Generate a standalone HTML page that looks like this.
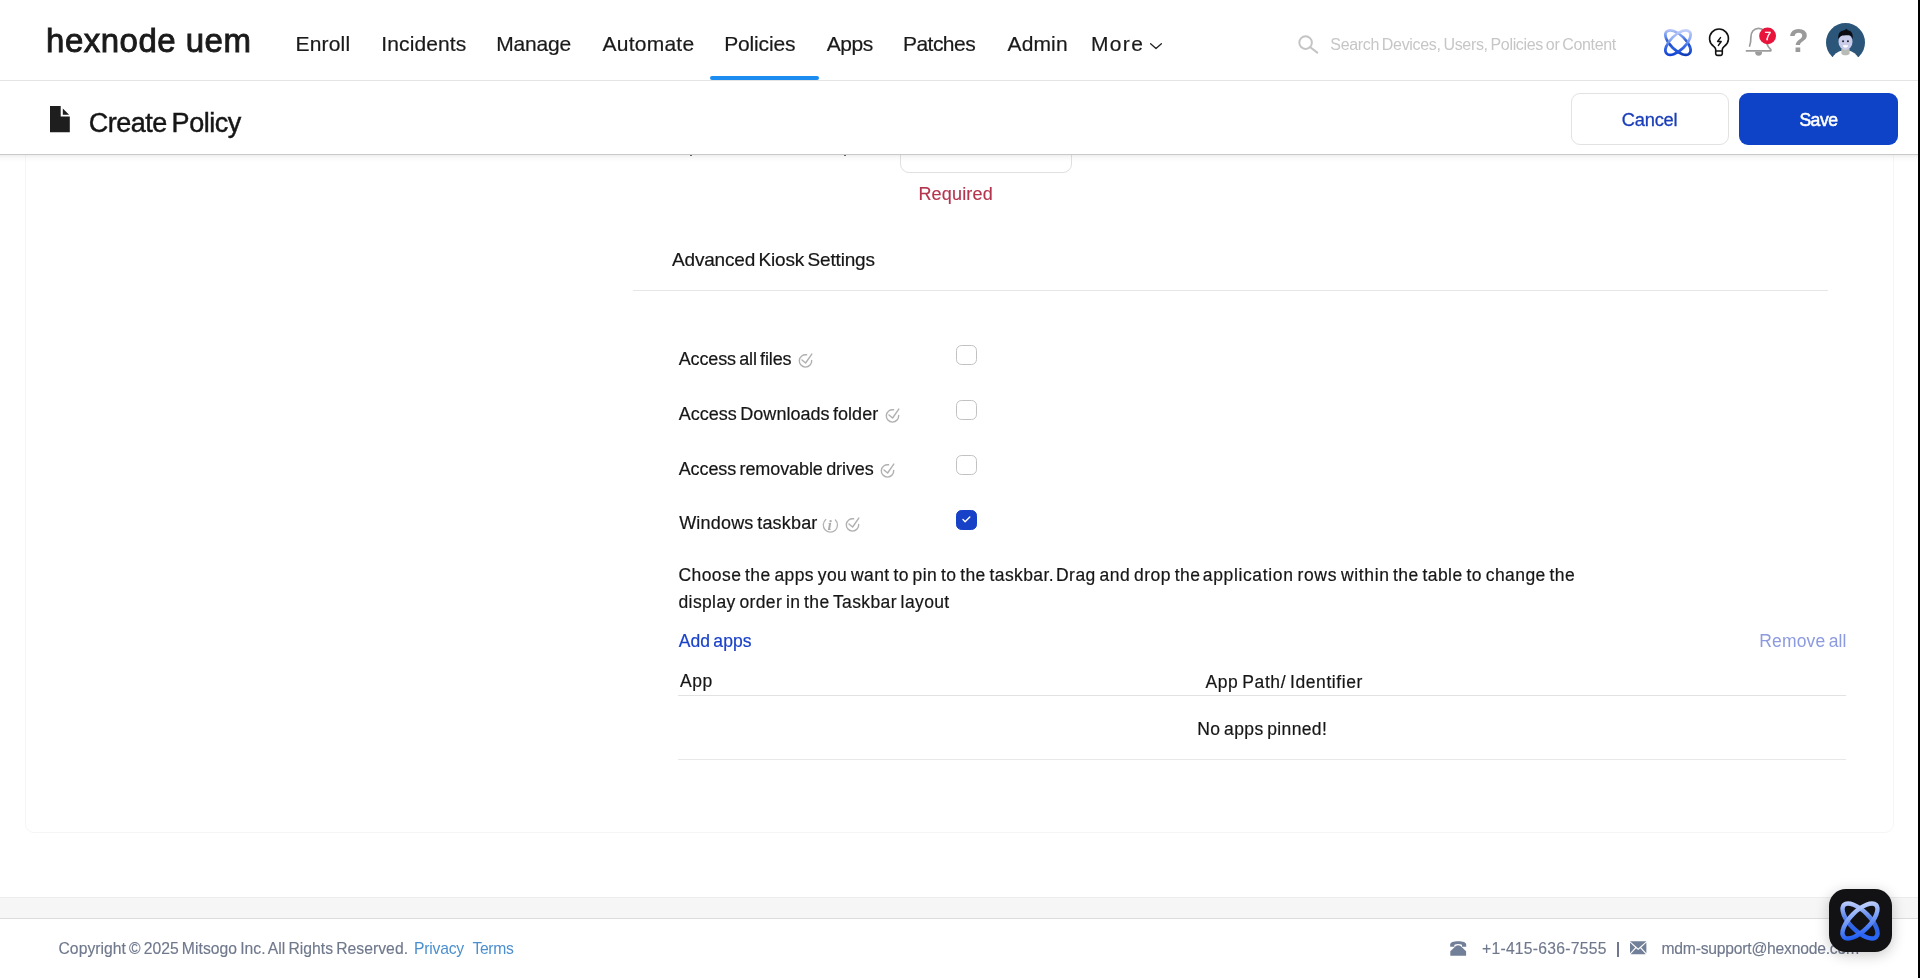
<!DOCTYPE html>
<html lang="en">
<head>
<meta charset="utf-8">
<title>Hexnode UEM - Create Policy</title>
<style>
*{box-sizing:border-box;margin:0;padding:0}
html,body{width:1920px;height:978px;overflow:hidden;background:#fff}
body{position:relative;font-family:"Liberation Sans",sans-serif;color:#222}
.t{position:absolute;white-space:pre;line-height:1;font-weight:400;text-decoration:none;font-style:normal}
.abs{position:absolute}
#app{position:absolute;left:0;top:0;width:1920px;height:978px;will-change:transform}
header.top{position:absolute;left:0;top:0;width:1920px;height:81px;border-bottom:1px solid #e4e4e4;background:#fff}
.underline{position:absolute;left:710px;top:76px;width:109px;height:4px;border-radius:2px;background:#1c8cf0}
.sub{position:absolute;left:0;top:81px;width:1920px;height:74px;background:#fff;border-bottom:1px solid #c9c9c9}
.subshadow{position:absolute;left:0;top:155px;width:1918px;height:7px;background:linear-gradient(rgba(0,0,0,.065),rgba(0,0,0,.022) 40%,rgba(0,0,0,0))}
.card{position:absolute;left:25px;top:140px;width:1869px;height:693px;border:1px solid #f5f5f5;border-radius:9px;background:#fff}
.btn{position:absolute;top:93px;height:52px;border-radius:9px}
.btn.cancel{left:1571px;width:158px;background:#fff;border:1px solid #e2e2e2}
.btn.save{left:1739px;width:159px;background:#0f43c7}
.input{position:absolute;left:900px;top:120px;width:172px;height:53px;border:1px solid #e0e0e0;border-radius:9px;background:#fff}
.hr{position:absolute;height:1px}
.cb{position:absolute;left:956px;width:21px;height:20px;border:1px solid #c2c2c2;border-radius:5.5px;background:#fff}
.cb.on{background:#1741c6;border-color:#1741c6}
.strip{position:absolute;left:0;top:897px;width:1920px;height:22px;background:#f6f6f6;border-top:1px solid #ececec;border-bottom:1px solid #dcdcdc}
.fab{position:absolute;left:1829px;top:889px;width:63px;height:63px;border-radius:17px;background:#121214;box-shadow:0 3px 14px rgba(0,0,0,.22)}
.edge{position:absolute;left:1918px;top:0;width:2px;height:978px;background:#000}
svg{position:absolute;overflow:visible}
</style>
</head>
<body>
<div id="app">
<main>
  <section class="card"></section>
  <div class="input"></div>
  <i class="abs" style="left:690px;top:155px;width:2px;height:1.2px;background:#6a6a6a"></i>
  <i class="abs" style="left:844px;top:155px;width:2px;height:1.2px;background:#6a6a6a"></i>
  <span class="t" style="left:918.4px;top:184.5px;font-size:18px;letter-spacing:0.19px;color:#b5344e;-webkit-text-stroke:0.15px;">Required</span>
  <h2 class="t" style="left:672px;top:249.8px;font-size:19px;letter-spacing:-0.18px;color:#161616;word-spacing:-1.62px;-webkit-text-stroke:0.2px;">Advanced Kiosk Settings</h2>
  <div class="hr" style="left:633px;top:290px;width:1195px;background:#e6e6e6"></div>

  <label class="t" style="left:678.7px;top:350px;font-size:18px;letter-spacing:-0.14px;color:#161616;word-spacing:-1.53px;-webkit-text-stroke:0.2px;">Access all files</label>
  <svg style="left:796.7px;top:352.2px" width="18" height="18" viewBox="0 0 18 18" fill="none" stroke="#b0b0b0" stroke-width="1.4" stroke-linecap="round" stroke-linejoin="round"><path d="M9.58 2.79A6.2 6.2 0 1 0 14.68 8.36"/><path d="M5 8L8.6 11L14.8 2.1"/></svg>
  <span class="cb" style="top:345px"></span>

  <label class="t" style="left:678.7px;top:404.6px;font-size:18px;letter-spacing:0.02px;color:#161616;word-spacing:-1.53px;-webkit-text-stroke:0.2px;">Access Downloads folder</label>
  <svg style="left:884.4px;top:406.8px" width="18" height="18" viewBox="0 0 18 18" fill="none" stroke="#b0b0b0" stroke-width="1.4" stroke-linecap="round" stroke-linejoin="round"><path d="M9.58 2.79A6.2 6.2 0 1 0 14.68 8.36"/><path d="M5 8L8.6 11L14.8 2.1"/></svg>
  <span class="cb" style="top:400px"></span>

  <label class="t" style="left:678.7px;top:459.7px;font-size:18px;letter-spacing:-0.09px;color:#161616;word-spacing:-1.53px;-webkit-text-stroke:0.2px;">Access removable drives</label>
  <svg style="left:879.4px;top:461.9px" width="18" height="18" viewBox="0 0 18 18" fill="none" stroke="#b0b0b0" stroke-width="1.4" stroke-linecap="round" stroke-linejoin="round"><path d="M9.58 2.79A6.2 6.2 0 1 0 14.68 8.36"/><path d="M5 8L8.6 11L14.8 2.1"/></svg>
  <span class="cb" style="top:455px"></span>

  <label class="t" style="left:679.2px;top:514.3px;font-size:18px;letter-spacing:0.19px;color:#161616;word-spacing:-1.53px;-webkit-text-stroke:0.2px;">Windows taskbar</label>
  <svg style="left:822px;top:516px" width="18" height="18" viewBox="0 0 18 18" fill="none" stroke="#b3b3b3" stroke-width="1.3" stroke-linecap="round"><path d="M3.84 3.56A7.1 7.1 0 1 0 13.42 3.98"/><text x="5.6" y="13.6" font-family="Liberation Serif, serif" font-style="italic" font-weight="700" font-size="15.5" fill="#adadad" stroke="none">i</text></svg>
  <svg style="left:844px;top:516px" width="18" height="18" viewBox="0 0 18 18" fill="none" stroke="#b0b0b0" stroke-width="1.4" stroke-linecap="round" stroke-linejoin="round"><path d="M9.58 2.79A6.2 6.2 0 1 0 14.68 8.36"/><path d="M5 8L8.6 11L14.8 2.1"/></svg>
  <span class="cb on" style="top:510px"><svg style="left:5.4px;top:5.2px" width="9" height="7" viewBox="0 0 9 7" fill="none" stroke="#fff" stroke-width="1.4" stroke-linecap="round" stroke-linejoin="round"><path d="M1 3.6l2.1 2.1l4.7-4.6"/></svg></span>

  <p><span class="t" style="left:678.5px;top:567.25px;font-size:17.5px;letter-spacing:0.41px;color:#161616;word-spacing:-1.49px;-webkit-text-stroke:0.2px;">Choose the apps you want to pin to the taskbar.</span> <span class="t" style="left:1056px;top:567.25px;font-size:17.5px;letter-spacing:0.46px;color:#161616;word-spacing:-1.49px;-webkit-text-stroke:0.2px;">Drag and drop the</span> <span class="t" style="left:1202.8px;top:567.25px;font-size:17.5px;letter-spacing:0.64px;color:#161616;word-spacing:-1.49px;-webkit-text-stroke:0.2px;">application rows within</span> <span class="t" style="left:1393px;top:567.25px;font-size:17.5px;letter-spacing:0.44px;color:#161616;word-spacing:-1.49px;-webkit-text-stroke:0.2px;">the table to change the</span>
  <span class="t" style="left:678.5px;top:593.5px;font-size:17.5px;letter-spacing:0.38px;color:#161616;word-spacing:-1.49px;-webkit-text-stroke:0.2px;">display order in the Taskbar layout</span></p>
  <a class="t" style="left:678.7px;top:633px;font-size:17.5px;letter-spacing:0.04px;color:#1a42c8;word-spacing:-1.49px;-webkit-text-stroke:0.2px;">Add apps</a>
  <a class="t" style="left:1759.3px;top:633px;font-size:17.5px;letter-spacing:0.13px;color:#8c9adf;word-spacing:-1.49px;">Remove all</a>
  <span class="t" style="left:680px;top:673.3px;font-size:17.5px;letter-spacing:0.59px;color:#161616;-webkit-text-stroke:0.2px;">App</span>
  <span class="t" style="left:1205.5px;top:673.5px;font-size:17.5px;letter-spacing:0.58px;color:#161616;word-spacing:-1.49px;-webkit-text-stroke:0.2px;">App Path/ Identifier</span>
  <div class="hr" style="left:678px;top:695px;width:1168px;background:#e2e2e2"></div>
  <span class="t" style="left:1197.3px;top:720.7px;font-size:17.5px;letter-spacing:0.36px;color:#161616;word-spacing:-1.49px;-webkit-text-stroke:0.2px;">No apps pinned!</span>
  <div class="hr" style="left:678px;top:759px;width:1168px;background:#e8e8e8"></div>
</main>

<div class="subshadow"></div>
<div class="sub">
  <svg style="left:50px;top:25.25px" width="20" height="27" viewBox="0 0 20 27" fill="#1e1e1e"><path d="M0 0H10.7V10.5H19.8V26.3H0z"/><path d="M12.8 2.4L19.1 8.7H12.8z"/></svg>
</div>
<h1 class="t" style="left:88.8px;top:109.5px;font-size:27px;letter-spacing:-0.49px;color:#161616;word-spacing:-2.3px;-webkit-text-stroke:0.45px;">Create Policy</h1>
<div class="btn cancel"></div>
<span class="t" style="left:1621.8px;top:110.9px;font-size:18.3px;letter-spacing:-0.22px;color:#1a3eb8;-webkit-text-stroke:0.3px;">Cancel</span>
<div class="btn save"></div>
<span class="t" style="left:1799.4px;top:111.9px;font-size:17.6px;letter-spacing:-0.51px;color:#fff;-webkit-text-stroke:0.55px #fff;">Save</span>

<header class="top">
  <span class="t" style="left:46.1px;top:24px;font-size:33px;letter-spacing:0.48px;color:#1a1a1a;-webkit-text-stroke:0.9px #1a1a1a;">hexnode uem</span>
  <nav>
    <a class="t" style="left:295.5px;top:32.5px;font-size:21px;letter-spacing:0.18px;color:#1a1a1a;-webkit-text-stroke:0.2px;">Enroll</a><a class="t" style="left:381.3px;top:32.5px;font-size:21px;letter-spacing:0.12px;color:#1a1a1a;-webkit-text-stroke:0.2px;">Incidents</a><a class="t" style="left:496.3px;top:32.5px;font-size:21px;letter-spacing:-0.2px;color:#1a1a1a;-webkit-text-stroke:0.2px;">Manage</a><a class="t" style="left:602.5px;top:32.5px;font-size:21px;letter-spacing:0.24px;color:#1a1a1a;-webkit-text-stroke:0.2px;">Automate</a><a class="t" style="left:724.3px;top:32.5px;font-size:21px;letter-spacing:-0.18px;color:#1a1a1a;-webkit-text-stroke:0.2px;">Policies</a><a class="t" style="left:826.7px;top:32.5px;font-size:21px;letter-spacing:-0.45px;color:#1a1a1a;-webkit-text-stroke:0.2px;">Apps</a><a class="t" style="left:903px;top:32.5px;font-size:21px;letter-spacing:-0.54px;color:#1a1a1a;-webkit-text-stroke:0.2px;">Patches</a><a class="t" style="left:1007.5px;top:32.5px;font-size:21px;letter-spacing:0.14px;color:#1a1a1a;-webkit-text-stroke:0.2px;">Admin</a><a class="t" style="left:1091px;top:32.5px;font-size:21px;letter-spacing:1.33px;color:#1a1a1a;-webkit-text-stroke:0.2px;">More</a>
    <svg style="left:1149px;top:42px" width="14" height="8" viewBox="0 0 14 8" fill="none" stroke="#222" stroke-width="1.3" stroke-linecap="round" stroke-linejoin="round"><path d="M1.6 1.7L7 6.5L12.4 1.7"/></svg>
    <div class="underline"></div>
  </nav>
  <svg style="left:1297px;top:35px" width="22" height="20" viewBox="0 0 22 20" fill="none" stroke="#c4c4c4" stroke-width="2" stroke-linecap="round"><circle cx="8.6" cy="7.6" r="6.3"/><path d="M13.3 12.2L20.3 17.6"/></svg>
  <span class="t" style="left:1330.3px;top:36.6px;font-size:16px;letter-spacing:-0.32px;color:#c6c6c6;word-spacing:-1.36px;">Search Devices, Users, Policies or Content</span>
  <!-- genie icon -->
  <svg style="left:1663px;top:28.4px" width="30" height="29.2" viewBox="0 0 30 30" preserveAspectRatio="none" fill="none" stroke-width="2.8">
    <defs><linearGradient id="g1" gradientUnits="userSpaceOnUse" x1="0" y1="1" x2="0" y2="29"><stop offset="0" stop-color="#c8d4fa"/><stop offset=".38" stop-color="#8eabf5"/><stop offset=".62" stop-color="#3a6ce8"/><stop offset="1" stop-color="#0f3fd0"/></linearGradient>
    <linearGradient id="g1b" gradientUnits="userSpaceOnUse" x1="0" y1="1" x2="0" y2="29"><stop offset="0" stop-color="#bccaf8"/><stop offset=".32" stop-color="#5a86ec"/><stop offset=".5" stop-color="#1c44b4"/><stop offset=".7" stop-color="#2a5fe4"/><stop offset="1" stop-color="#0c36b0"/></linearGradient></defs>
    <path stroke="url(#g1b)" d="M3.69 3.69A16 7.4 45 1 0 26.31 26.31A16 7.4 45 1 0 3.69 3.69Z"/>
    <path stroke="url(#g1)" d="M26.31 3.69A16 7.4 -45 1 0 3.69 26.31A16 7.4 -45 1 0 26.31 3.69Z"/>
  </svg>
  <!-- bulb -->
  <svg style="left:1707.3px;top:27px" width="24" height="30" viewBox="0 0 24 30" fill="none" stroke="#111" stroke-width="1.6" stroke-linecap="round" stroke-linejoin="round">
    <path d="M8.7 23.8V22.4C8.7 21 7.5 20.2 6.3 19A9.45 9.45 0 1 1 17.7 19C16.5 20.2 15.3 21 15.3 22.4V23.8"/>
    <path d="M8.7 24h6.6v2.6a1.8 1.8 0 0 1-1.8 1.8h-3a1.8 1.8 0 0 1-1.8-1.8z"/>
    <path d="M13.5 10.6L10.6 14.5H14.2L11.4 18.4" stroke-width="1.45"/>
  </svg>
  <!-- bell -->
  <svg style="left:1745px;top:26px" width="32" height="32" viewBox="0 0 32 32" fill="none">
    <path d="M4.6 20C5.7 17.2 5.9 14.5 5.9 11C5.9 6 9 2.3 13.6 2.3C18.2 2.3 21.3 6 21.3 11C21.3 15 21.7 17.8 23 20.2C24 22 25.6 23 25.9 24C26.1 24.7 25.6 24.9 25 24.9H1.5" stroke="#9c9c9c" stroke-width="1.7" stroke-linecap="round" stroke-linejoin="round"/>
        <path d="M10.1 25.8a3.5 3.9 0 0 0 7 0z" fill="#9c9c9c"/>
    <circle cx="22.6" cy="9.9" r="8.4" fill="#e8143b"/>
    <text x="22.7" y="14.1" text-anchor="middle" font-family="Liberation Sans, sans-serif" font-size="11.8" fill="#fff" stroke="#fff" stroke-width=".3">7</text>
  </svg>
  <span class="t" style="left:1788.5px;top:23.9px;font-size:33px;letter-spacing:0.0px;color:#9a9a9a;font-weight:700;">?</span>
  <!-- avatar -->
  <svg style="left:1825.6px;top:23.2px" width="39" height="39" viewBox="0 0 40 40">
    <defs><clipPath id="av"><circle cx="20" cy="20" r="20.7"/></clipPath></defs>
    <g clip-path="url(#av)">
      <circle cx="20" cy="20" r="20" fill="#2b5579"/>
      <ellipse cx="19.8" cy="48" rx="17" ry="20.3" fill="#fff"/>
      <path d="M15.8 26h8.4v5.2c0 2.4-8.4 2.4-8.4 0z" fill="#b9bcb6"/>
      <ellipse cx="20" cy="19.3" rx="7.2" ry="8.4" fill="#c8cce8"/>
      <path d="M12.6 16.5C12 10 15 7.8 18 7.6L21.5 5.8L22.2 7.4C26 7.8 28 11 27.4 16.5C26.5 13.5 25 12.5 23 12.6C19 12.8 14.5 12 12.6 16.5z" fill="#0a0c12"/>
      <circle cx="17.5" cy="18.8" r="1" fill="#1a1d2a"/><circle cx="22.5" cy="18.8" r="1" fill="#1a1d2a"/>
      <path d="M17.3 22.8h5.4c0 3.2-5.4 3.2-5.4 0z" fill="#fff"/>
    </g>
  </svg>
</header>

<footer>
  <div class="strip"></div>
  <span class="t" style="left:58.5px;top:941.25px;font-size:15.7px;letter-spacing:0.04px;color:#6f788c;word-spacing:-1.33px;-webkit-text-stroke:0.15px;">Copyright © 2025 Mitsogo Inc. All Rights Reserved.</span><a class="t" style="left:414px;top:941.25px;font-size:15.7px;letter-spacing:-0.22px;color:#4b8fcf;">Privacy</a><a class="t" style="left:472.5px;top:941.25px;font-size:15.7px;letter-spacing:-0.36px;color:#4b8fcf;">Terms</a>
  <svg style="left:1450px;top:941px" width="17" height="15" viewBox="0 0 17 15" fill="#727f98"><path d="M0.2 5.7V3.5C0.2 1.4 3.5 0.2 8.2 0.2C12.9 0.2 16.2 1.4 16.2 3.5V5.7H12V3.7C10.8 3.3 9.6 3.1 8.2 3.1C6.8 3.1 5.6 3.3 4.4 3.7V5.7z"/><path d="M6.1 4.7Q8.2 3.9 10.3 4.7L16.1 10.3V14.8H0.3V10.3z"/></svg>
  <span class="t" style="left:1482px;top:941.25px;font-size:15.7px;letter-spacing:0.26px;color:#6f788c;-webkit-text-stroke:0.15px;">+1-415-636-7555</span>
  <span class="abs" style="left:1617.3px;top:942.2px;width:1.45px;height:14.8px;background:#6f788c"></span>
  <svg style="left:1630px;top:941.3px" width="17" height="14" viewBox="0 0 17 14" fill="#727f98"><path d="M0 0.2H16.4L8.2 7.6z"/><path d="M0 1.6L5.2 6.4L0 12.2z"/><path d="M16.4 1.6L11.2 6.4L16.4 12.2z"/><path d="M0.6 13.3L6.1 7.3L8.2 9.1L10.3 7.3L15.8 13.3z"/></svg>
  <span class="t" style="left:1661.5px;top:941.25px;font-size:15.7px;letter-spacing:-0.23px;color:#6f788c;-webkit-text-stroke:0.15px;">mdm-support@hexnode.com</span>
</footer>

<aside class="fab">
  <svg style="left:10.2px;top:10.6px" width="42" height="42" viewBox="0 0 30 30" fill="none" stroke-width="3.2">
    <defs><linearGradient id="g2" gradientUnits="userSpaceOnUse" x1="4" y1="2" x2="10" y2="28"><stop offset="0" stop-color="#d3defe"/><stop offset=".45" stop-color="#86a8fa"/><stop offset="1" stop-color="#1f5cf2"/></linearGradient>
    <linearGradient id="g2b" gradientUnits="userSpaceOnUse" x1="0" y1="2" x2="0" y2="28"><stop offset="0" stop-color="#b9cbfc"/><stop offset=".4" stop-color="#5a86ee"/><stop offset=".55" stop-color="#3a69dc"/><stop offset=".75" stop-color="#2a63ee"/><stop offset="1" stop-color="#2a66f6"/></linearGradient></defs>
    <path stroke="url(#g2b)" d="M3.54 3.54A16.2 7 45 1 0 26.46 26.46A16.2 7 45 1 0 3.54 3.54Z"/>
    <path stroke="url(#g2)" d="M26.46 3.54A16.2 7 -45 1 0 3.54 26.46A16.2 7 -45 1 0 26.46 3.54Z"/>
  </svg>
</aside>
<div class="edge"></div>
</div>
</body>
</html>
